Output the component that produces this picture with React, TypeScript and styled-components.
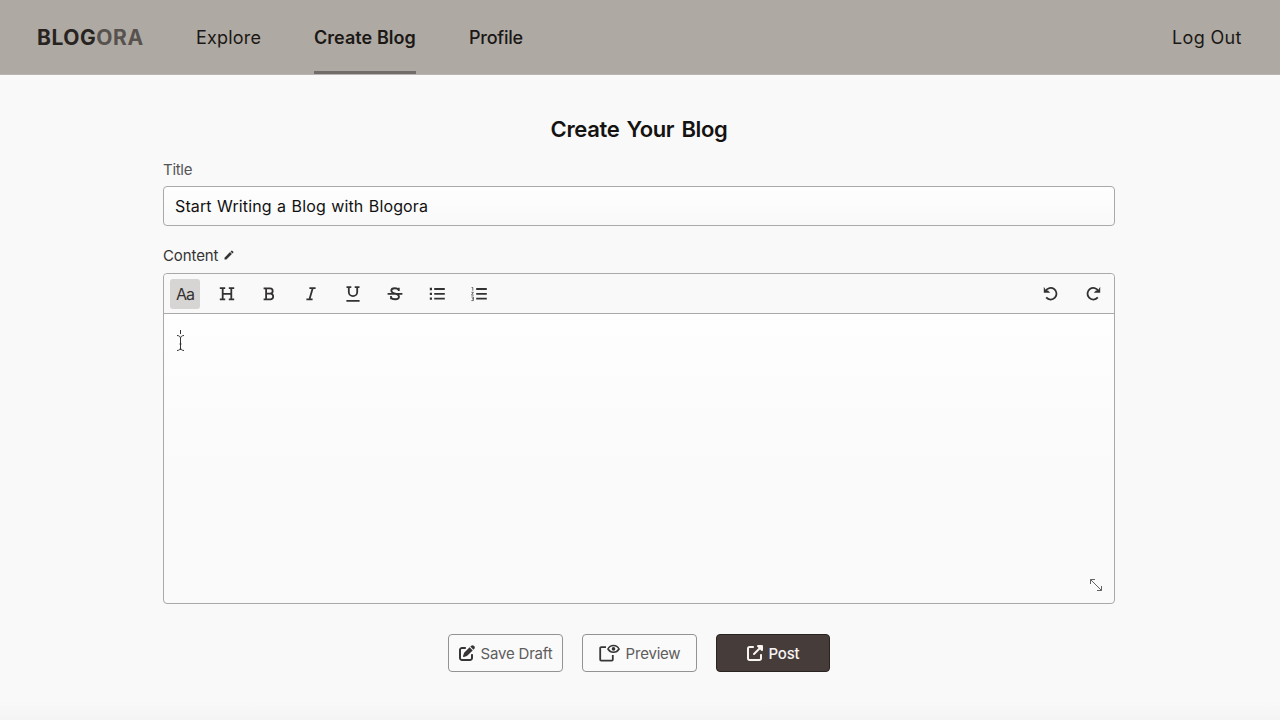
import React from "react";
import styled, { createGlobalStyle } from "styled-components";
import { FaPenToSquare, FaUpRightFromSquare } from "react-icons/fa6";
import { MdEdit } from "react-icons/md";

const GlobalStyle = createGlobalStyle`
  * { box-sizing: border-box; }
  body {
    margin: 0;
    background: #f9f9f9;
    color: #151312;
    font-family: Inter, "Liberation Sans", sans-serif;
    overflow: hidden;
  }
`;

const Page = styled.div`
  width: 1280px;
  height: 720px;
  display: flex;
  flex-direction: column;
  background: linear-gradient(#f9f9f9 702px, #f4f4f4 720px);
`;

const Header = styled.header`
  height: 75px;
  flex: none;
  display: flex;
  align-items: stretch;
  padding: 0 38px 0 37px;
  background: #aea9a3;
  border-bottom: 1px solid #b9b5b2;
`;

const Logo = styled.div`
  width: 106px;
  margin-right: 53px;
  line-height: 75px;
  font-size: 21px;
  font-weight: 700;
  letter-spacing: 0.55px;
  white-space: nowrap;
  color: #272320;
  span { color: #57524e; }
`;

const NavItem = styled.a<{ $width: number; $weight?: number; $active?: boolean; $spacing?: number }>`
  width: ${(p) => p.$width}px;
  height: 74px;
  margin-right: ${(p) => (p.$active ? 53 : 54)}px;
  line-height: 75px;
  font-size: 18px;
  font-weight: ${(p) => p.$weight ?? 400};
  letter-spacing: ${(p) => p.$spacing ?? 0}px;
  white-space: nowrap;
  color: #1b1815;
  box-shadow: ${(p) => (p.$active ? "inset 0 -3px 0 #716c69" : "none")};
  &:last-child { margin: 0 0 0 auto; }
`;

const Main = styled.main`
  width: 952px;
  margin-left: 163px;
  padding-top: 39px;
  display: flex;
  flex-direction: column;
`;

const Heading = styled.h1`
  margin: 0;
  height: 30px;
  line-height: 30px;
  text-align: center;
  font-size: 22px;
  font-weight: 600;
  letter-spacing: -0.35px;
  word-spacing: 2px;
`;

const Label = styled.label<{ $dark?: boolean }>`
  display: flex;
  align-items: center;
  gap: 5px;
  height: 20px;
  margin-top: ${(p) => (p.$dark ? 19 : 15)}px;
  font-size: 15px;
  letter-spacing: ${(p) => (p.$dark ? -0.1 : -0.3)}px;
  color: ${(p) => (p.$dark ? "#353333" : "#555")};
`;

const TitleInput = styled.input`
  width: 952px;
  height: 40px;
  margin-top: 7px;
  padding: 0 11px;
  border: 1px solid #a9a9a9;
  border-radius: 4px;
  outline: 0;
  background: linear-gradient(#fefefe, #f9f9f9);
  font: 400 16px Inter, sans-serif;
  letter-spacing: 0.12px;
  word-spacing: 0.8px;
  color: #111;
`;

const Editor = styled.section`
  position: relative;
  height: 331px;
  margin-top: 8px;
  border: 1px solid #a9a9a9;
  border-radius: 4px;
  background: linear-gradient(#fefefe 12%, #fafafa 60%);
`;

const Toolbar = styled.div`
  height: 40px;
  display: flex;
  align-items: center;
  gap: 12px;
  padding: 0 6px;
  border-bottom: 1px solid #a9a9a9;
  border-radius: 4px 4px 0 0;
  background: #f9f9f9;
`;

const Tool = styled.button<{ $active?: boolean; $push?: boolean }>`
  width: 30px;
  height: 30px;
  padding: 0;
  display: grid;
  place-items: center;
  border: 0;
  border-radius: 3px;
  margin-left: ${(p) => (p.$push ? "auto" : 0)};
  background: ${(p) => (p.$active ? "#d6d5d4" : "transparent")};
  color: #343131;
  font: 400 16px Inter, sans-serif;
  letter-spacing: -0.9px;
`;

const Glyph = styled.svg`
  width: 18px;
  height: 18px;
  display: block;
  fill: none;
  stroke: currentColor;
  stroke-width: 1.8;
`;

const TextCursor = styled.svg`
  position: absolute;
  left: 12px;
  top: 56px;
  width: 9px;
  height: 23px;
  fill: none;
  stroke: #333;
`;

const Resize = styled.svg`
  position: absolute;
  right: 11px;
  bottom: 11px;
  width: 14px;
  height: 14px;
  fill: none;
  stroke: #626262;
`;

const Actions = styled.div`
  display: flex;
  justify-content: center;
  gap: 19px;
  margin-top: 30px;
`;

const Action = styled.button<{ $primary?: boolean }>`
  width: ${(p) => (p.$primary ? 114 : 115)}px;
  height: 38px;
  padding: 0;
  display: flex;
  align-items: center;
  justify-content: center;
  gap: 6px;
  border: 1px solid ${(p) => (p.$primary ? "#292321" : "#939393")};
  border-radius: 4px;
  background: ${(p) => (p.$primary ? "#463d3b" : "#fafafa")};
  color: ${(p) => (p.$primary ? "#f8f4f2" : "#5f5d5d")};
  font: ${(p) => (p.$primary ? 500 : 400)} 15px Inter, sans-serif;
  letter-spacing: -0.2px;
  white-space: nowrap;
  svg { flex: none; color: ${(p) => (p.$primary ? "#f8f4f2" : "#383535")}; }
`;

const PreviewIcon = styled.svg`
  width: 21px;
  height: 18px;
  fill: none;
  stroke: currentColor;
`;

const glyphs = {
  heading: "M1.8 3.2h5.4M10.8 3.2h5.4M1.8 14.4h5.4M10.8 14.4h5.4M4.7 3.2v11M13.3 3.2v11M4.7 8.8h8.6",
  bold: "M3.6 3.4h6.5a2.6 2.6 0 0 1 0 5.2H6M10 8.6h.8a2.9 2.9 0 0 1 0 5.7H3.6M6.1 3.4v11",
  italic: "M7.4 3.2h6.2M4.4 14.4h6.2M10.7 3.2 7.4 14.4",
  underline: "M2.5 2.1h4.8M10.7 2.1h4.8M4.8 2.2V7a4.2 4.2 0 0 0 8.4 0V2.2M2.4 15.8h13.2",
  strike: "M12.8 6V2.8M12.8 5.2C11.8 2.7 5.3 2.3 5.3 5.7c0 1.8 1.9 2.3 3.8 2.9s3.9 1.1 3.9 3.1c0 3.5-7 3.1-8 .6M5 11v3.3M1.6 8.9h14.8",
  bullets: "M6.2 4H16.8M6.2 8.8H16.8M6.2 13.6H16.8",
  undo: "M3.6 6A5.8 5.8 0 1 1 4.2 12.4",
  redo: "M14.4 6A5.8 5.8 0 1 0 13.8 12.4",
};

const arrowHeads: Partial<Record<keyof typeof glyphs, string>> = {
  undo: "M1.8 1.8v6h6.4L6 5.6 4.1 5.4Z",
  redo: "M16.2 1.8v6H9.8L12 5.6l1.9-.2Z",
};

function ToolGlyph({ name }: { name: keyof typeof glyphs }) {
  const head = arrowHeads[name];
  return (
    <Glyph viewBox="0 0 18 18">
      <path d={glyphs[name]} />
      {name === "bullets" && (
        <path d="M1.8 4h2.2M1.8 8.8h2.2M1.8 13.6h2.2" strokeWidth="2.3" />
      )}
      {head && <path d={head} fill="currentColor" stroke="none" />}
    </Glyph>
  );
}

export default function App() {
  return (
    <Page>
      <GlobalStyle />
      <Header>
        <Logo>BLOG<span>ORA</span></Logo>
        <NavItem $width={64} $spacing={0.2}>Explore</NavItem>
        <NavItem $width={102} $weight={600} $spacing={0.05} $active>Create Blog</NavItem>
        <NavItem $width={54} $weight={500} $spacing={-0.25}>Profile</NavItem>
        <NavItem $width={70} $spacing={0.35}>Log Out</NavItem>
      </Header>
      <Main>
        <Heading>Create Your Blog</Heading>
        <Label htmlFor="title">Title</Label>
        <TitleInput id="title" defaultValue="Start Writing a Blog with Blogora" />
        <Label $dark>Content <MdEdit size={12} /></Label>
        <Editor>
          <Toolbar>
            <Tool $active>Aa</Tool>
            <Tool aria-label="Heading"><ToolGlyph name="heading" /></Tool>
            <Tool aria-label="Bold"><ToolGlyph name="bold" /></Tool>
            <Tool aria-label="Italic"><ToolGlyph name="italic" /></Tool>
            <Tool aria-label="Underline"><ToolGlyph name="underline" /></Tool>
            <Tool aria-label="Strikethrough"><ToolGlyph name="strike" /></Tool>
            <Tool aria-label="Bulleted list"><ToolGlyph name="bullets" /></Tool>
            <Tool aria-label="Numbered list">
              <Glyph viewBox="0 0 18 18">
                <path d="M6.2 4H16.8M6.2 8.8H16.8M6.2 13.6H16.8" />
                <path d="M1.6 2.5h1.2v3.2M1.4 7.3h2L1.5 10.1h2.2M1.4 12h2v3.6h-2M2 13.8h1.4" strokeWidth=".7" />
              </Glyph>
            </Tool>
            <Tool aria-label="Undo" $push><ToolGlyph name="undo" /></Tool>
            <Tool aria-label="Redo"><ToolGlyph name="redo" /></Tool>
          </Toolbar>
          <TextCursor viewBox="0 0 9 23">
            <path d="M4.5 0v4M1 5.5c2 0 3.5 1 3.5 3 0-2 1.5-3 3.5-3M4.5 8v12M1 20.5c2 0 3.5-1 3.5-3 0 2 1.5 3 3.5 3M3.5 14h2" />
          </TextCursor>
          <Resize viewBox="0 0 14 14">
            <path d="M1.5 1.5l11 11M1.5 6V1.5H6M8 12.5h4.5V8" />
          </Resize>
        </Editor>
        <Actions>
          <Action><FaPenToSquare size={16} />Save Draft</Action>
          <Action>
            <PreviewIcon viewBox="0 0 21 18">
              <path d="M7 3.2H2.2a1 1 0 0 0-1 1v11.4a1 1 0 0 0 1 1h10.6a1 1 0 0 0 1-1V11" strokeWidth="1.8" />
              <path d="M8.9 5c2.5-4.6 8.7-4.6 11.2 0-2.5 4.2-8.7 4.2-11.2 0Z" strokeWidth="1.5" />
              <circle cx="14.5" cy="4.9" r="1.8" fill="currentColor" stroke="none" />
            </PreviewIcon>
            Preview
          </Action>
          <Action $primary><FaUpRightFromSquare size={16} />Post</Action>
        </Actions>
      </Main>
    </Page>
  );
}
